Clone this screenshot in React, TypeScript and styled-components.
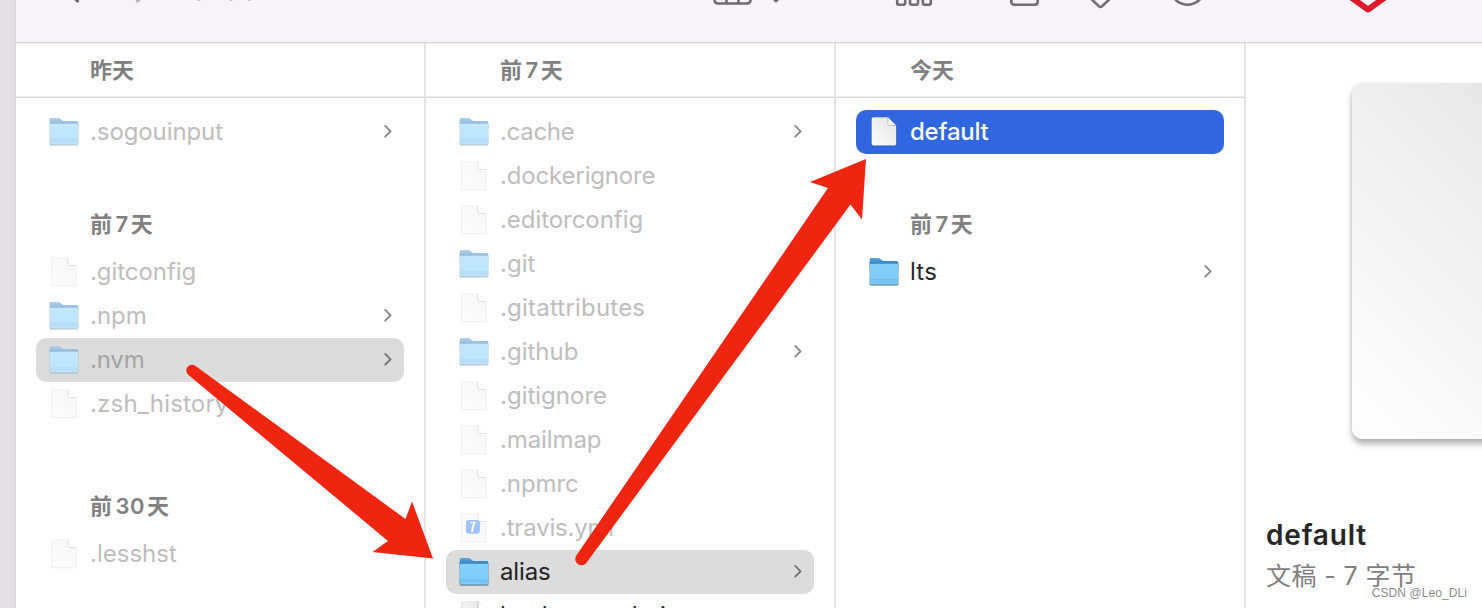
import React from 'react';
import styled, { createGlobalStyle, css } from 'styled-components';

const Global = createGlobalStyle`
  * { box-sizing: border-box; }
  body { margin: 0; overflow: hidden; background: #fff; }
`;

const sans = `Inter, "Noto Sans CJK SC", sans-serif`;

const Desktop = styled.div`
  position: relative;
  display: flex;
  width: 1482px;
  height: 608px;
  overflow: hidden;
  background: #e5e0e6;
  font-family: ${sans};
`;
const Backdrop = styled.div`
  flex: 0 0 16px;
  background: #e5e0e6;
  border-right: 1px solid #dad5db;
`;
const Finder = styled.main`
  flex: 1;
  min-width: 0;
  display: flex;
  flex-direction: column;
  background: #fff;
`;
const Toolbar = styled.header`
  flex: 0 0 43px;
  height: 43px;
  background: #f8f3fa;
  border-bottom: 1px solid #d6d2d8;
  svg { display: block; }
`;
const Browser = styled.div`
  flex: 1;
  min-height: 0;
  display: flex;
`;
const Column = styled.section`
  flex: 0 0 410px;
  border-right: 2px solid #e4e4e4;
  overflow: hidden;
`;
const ColumnHead = styled.div`
  height: 55px;
  padding: 0 0 1px 74px;
  display: flex;
  align-items: center;
  border-top: 1px solid #f0f0f0;
  border-bottom: 1px solid #dadada;
  box-shadow: inset 0 -1px 0 #efefef;
`;
const HeadText = styled.span`
  font-size: 22px;
  line-height: 26px;
  font-weight: 600;
  color: #808080;
  white-space: pre;
`;
const Digits = styled.span`
  margin: 0 2px 0 3.5px;
  letter-spacing: 0.5px;
`;
const Items = styled.div`
  padding: 12px 20px 0;
`;
const GroupHead = styled.div<{ $height: number }>`
  height: ${(p) => p.$height}px;
  padding: 0 0 13px 54px;
  display: flex;
  align-items: flex-end;
`;
type Tone = 'none' | 'gray' | 'blue';
const Row = styled.div<{ $tone: Tone; $dim: boolean }>`
  height: 44px;
  padding: 0 9.5px 0 12px;
  display: flex;
  align-items: center;
  border-radius: 10px;
  font-size: 24px;
  color: ${(p) => (p.$dim ? '#bdbdbd' : '#262626')};
  ${(p) => p.$tone === 'gray' && css`
    background: #dcdcdc;
    color: ${p.$dim ? '#a3a3a3' : '#222'};
  `}
  ${(p) => p.$tone === 'blue' && css`
    background: #3067e0;
    color: #fff;
    font-weight: 500;
  `}
`;
const IconSlot = styled.span`
  flex: 0 0 32px;
  height: 32px;
  margin-right: 10px;
  svg { display: block; overflow: visible; }
`;
const Name = styled.span<{ $tracking: number }>`
  flex: 1;
  line-height: 30px;
  letter-spacing: ${(p) => p.$tracking}px;
  white-space: nowrap;
`;
const Preview = styled.aside`
  flex: 1;
  min-width: 0;
  overflow: hidden;
  border-top: 1px solid #f0f0f0;
`;
const PreviewSheet = styled.div`
  width: 280px;
  height: 356px;
  margin: 39px 0 0 106px;
  border-radius: 11px;
  background: linear-gradient(225deg, #e0e0e0 0%, #eeeeee 45%, #fdfdfd 92%);
  box-shadow: 0 5px 6px rgba(0, 0, 0, 0.3), 0 0 3px rgba(0, 0, 0, 0.08);
`;
const PreviewTitle = styled.div`
  margin: 78px 0 0 20px;
  font-size: 28px;
  line-height: 36px;
  font-weight: 600;
  letter-spacing: 0.8px;
  color: #262626;
`;
const PreviewMeta = styled.div`
  margin: 4px 0 0 20px;
  font-size: 25px;
  line-height: 38px;
  letter-spacing: 0.4px;
  color: #808080;
  white-space: pre;
`;
const Annotations = styled.svg`
  position: absolute;
  left: 0;
  top: 0;
  pointer-events: none;
`;
const Watermark = styled.div`
  position: absolute;
  right: 15px;
  bottom: 7px;
  font: 12px/16px "Liberation Sans", sans-serif;
  letter-spacing: 0.08px;
  color: #8c8c8c;
  text-shadow: 0 0 1px #fff;
`;

const FolderIcon = ({ dim }: { dim: boolean }) => {
  const back = dim ? ['#aad2ed', '#96bde0'] : ['#55a8dc', '#3a85c6'];
  const front = dim ? ['#c3e8fe', '#bbe3fb'] : ['#83d0fc', '#7bcaf8'];
  const id = dim ? 'Dim' : 'Full';
  return (
    <svg width="32" height="32" viewBox="0 0 32 32">
      <defs>
        <linearGradient id={`front${id}`} x1="0" y1="0" x2="0" y2="1">
          <stop offset="0" stopColor={front[0]} />
          <stop offset="1" stopColor={front[1]} />
        </linearGradient>
        <linearGradient id={`back${id}`} x1="0" y1="0" x2="0" y2="1">
          <stop offset="0" stopColor={back[0]} />
          <stop offset="0.5" stopColor={back[1]} />
        </linearGradient>
      </defs>
      <path d="M1.400 6v22q0 1.900 1.700 1.900h25.700q1.900 0 1.900-1.900V8z" fill="#000" opacity={dim ? 0.13 : 0.3} />
      <path d="M1.700 3.400Q1.700 2 3.100 2h7.200q1 0 1.700.6l2 1.700q.8.6 1.800.6h12.900q1.600 0 1.600 1.600V12H1.700z" fill={`url(#back${id})`} />
      <path d="M1.700 9.200q0-1.400 1.400-1.400h25.800q1.400 0 1.400 1.400v17.900q0 1.500-1.500 1.500H3.100q-1.400 0-1.400-1.500z" fill={`url(#front${id})`} />
      <path d="M1.700 23.700H30.300M1.700 25.600H30.300" stroke={dim ? '#b0d8f0' : '#68b6e4'} strokeWidth=".7" />
      <path d="M1.800 27q0 1.500 1.400 1.500h25.500q1.500 0 1.500-1.500" stroke={dim ? '#abd0e8' : '#5ba5d3'} strokeWidth=".9" fill="none" />
    </svg>
  );
};

const FileIcon = ({ dim, badge }: { dim: boolean; badge?: boolean }) => {
  const id = dim ? 'paperDim' : 'paperFull';
  return (
    <svg width="32" height="32" viewBox="0 0 32 32">
      <defs>
        <linearGradient id={id} x1="1" y1="0" x2="0" y2="1">
          <stop offset="0" stopColor={dim ? '#f6f6f6' : '#e4e4e4'} />
          <stop offset="1" stopColor={dim ? '#fdfdfd' : '#fbfbfb'} />
        </linearGradient>
      </defs>
      <path d="M5 1.300h15l8.700 8.700v18.400q0 1.900-1.900 1.900H5q-1.900 0-1.900-1.900V3.200q0-1.900 1.900-1.900z" fill="#000" opacity={dim ? 0.09 : 0.2} />
      <path d="M5.300 1.300h14.300L28.200 9.700v18q0 1.700-1.600 1.700H5.300q-1.700 0-1.700-1.700V2.900q0-1.600 1.700-1.600z" fill={`url(#${id})`} />
      <path d="M19.800 1.300v6.700q0 1.500 1.600 1.500h6.800z" fill="#fff" />
      <path d="M19.900 1.500v6.600q0 1.400 1.500 1.400H28" stroke={dim ? '#dadada' : '#b4b4b4'} strokeWidth=".9" fill="none" />
      {badge && (
        <>
          <rect x="7.900" y="8" width="14" height="13.800" rx="3.200" fill="#9fc3ff" />
          <path d="M15.900 11.200L14 19.300" stroke="#fff" strokeWidth="2" strokeLinecap="round" />
          <path d="M12.800 10.800q2.200-1.300 5.200-.2" stroke="#fff" strokeWidth="1.200" strokeLinecap="round" fill="none" />
        </>
      )}
    </svg>
  );
};

const Chevron = ({ dark }: { dark?: boolean }) => (
  <svg width="14" height="16" viewBox="0 0 14 16" fill="none">
    <path d="M4.200 1.900l5.400 5.400-5.400 5.400" stroke={dark ? '#707070' : '#858585'} strokeWidth="1.800" strokeLinecap="round" strokeLinejoin="round" />
  </svg>
);

interface Entry {
  name: string;
  kind?: 'folder' | 'yaml';
  dim?: boolean;
  tone?: Tone;
  tracking?: number;
}

const FileRow = ({ name, kind, dim = false, tone = 'none', tracking = 0 }: Entry) => (
  <Row $tone={tone} $dim={dim}>
    <IconSlot>
      {kind === 'folder' ? <FolderIcon dim={dim} /> : <FileIcon dim={dim} badge={kind === 'yaml'} />}
    </IconSlot>
    <Name $tracking={tracking}>{name}</Name>
    {kind === 'folder' && <Chevron dark={tone === 'gray'} />}
  </Row>
);

const DaysAgo = ({ days }: { days: number }) => (
  <HeadText>前<Digits>{days}</Digits>天</HeadText>
);

const repoFiles: Entry[] = [
  { name: '.cache', kind: 'folder', dim: true, tracking: -0.3 },
  { name: '.dockerignore', dim: true, tracking: -0.16 },
  { name: '.editorconfig', dim: true, tracking: -0.05 },
  { name: '.git', kind: 'folder', dim: true },
  { name: '.gitattributes', dim: true, tracking: 0.2 },
  { name: '.github', kind: 'folder', dim: true },
  { name: '.gitignore', dim: true },
  { name: '.mailmap', dim: true, tracking: -0.1 },
  { name: '.npmrc', dim: true, tracking: -0.1 },
  { name: '.travis.yml', kind: 'yaml', dim: true, tracking: -0.2 },
  { name: 'alias', kind: 'folder', tone: 'gray', tracking: -0.15 },
  { name: 'bash_completion', tracking: 0.2 },
];

export default function App() {
  return (
    <>
      <Global />
      <Desktop>
        <Backdrop />
        <Finder>
          <Toolbar>
            <svg width="1466" height="42" viewBox="16 0 1466 42" fill="none" stroke="#706b72" strokeWidth="2.6">
              <path d="M68-9l9.500 10" strokeWidth="3.200" strokeLinecap="round" />
              <path d="M146-8l-8.500 9" stroke="#bbb6bd" strokeWidth="3.200" strokeLinecap="round" />
              <path d="M197 0h3.500M229.500 0h3M248 0h3" stroke="#cbc6cd" strokeWidth="2" />
              <path d="M714.500-8V0q0 3.500 3.500 3.500h29q3.500 0 3.500-3.500V-8M726.500-8V3.500M738.500-8V3.500" />
              <path d="M770-5.500l6 6 6-6" strokeWidth="3.600" strokeLinecap="round" strokeLinejoin="round" />
              <rect x="897.200" y="-4" width="8" height="8.800" rx="2" />
              <rect x="910" y="-4" width="8" height="8.800" rx="2" />
              <rect x="922.800" y="-4" width="8" height="8.800" rx="2" />
              <path d="M1011.300-8V1.500q0 3.200 3.200 3.200h20q3.200 0 3.200-3.200V-8" />
              <path d="M1088-4l11 10.300q1.500 1.200 3 0L1113-4" />
              <circle cx="1187.500" cy="-12.500" r="17.200" />
              <path d="M1340-11l28 19 28-19V-20H1340z" fill="#fff" stroke="none" />
              <path d="M1340-10.500l28 20 28-20" stroke="#df1b2b" strokeWidth="6" strokeLinejoin="round" />
            </svg>
          </Toolbar>
          <Browser>
            <Column>
              <ColumnHead><HeadText>昨天</HeadText></ColumnHead>
              <Items>
                <FileRow name=".sogouinput" kind="folder" dim tracking={-0.1} />
                <GroupHead $height={96}><DaysAgo days={7} /></GroupHead>
                <FileRow name=".gitconfig" dim tracking={-0.05} />
                <FileRow name=".npm" kind="folder" dim />
                <FileRow name=".nvm" kind="folder" dim tone="gray" tracking={-0.2} />
                <FileRow name=".zsh_history" dim tracking={0.2} />
                <GroupHead $height={106}><DaysAgo days={30} /></GroupHead>
                <FileRow name=".lesshst" dim />
              </Items>
            </Column>
            <Column>
              <ColumnHead><DaysAgo days={7} /></ColumnHead>
              <Items>
                {repoFiles.map((f) => <FileRow key={f.name} {...f} />)}
              </Items>
            </Column>
            <Column>
              <ColumnHead><HeadText>今天</HeadText></ColumnHead>
              <Items>
                <FileRow name="default" tone="blue" tracking={-0.25} />
                <GroupHead $height={96}><DaysAgo days={7} /></GroupHead>
                <FileRow name="lts" kind="folder" tracking={0.2} />
              </Items>
            </Column>
            <Preview>
              <PreviewSheet />
              <PreviewTitle>default</PreviewTitle>
              <PreviewMeta>文稿 - 7 字节</PreviewMeta>
            </Preview>
          </Browser>
        </Finder>
        <Annotations width="1482" height="608" viewBox="0 0 1482 608" fill="#ef2411">
          <path d="M195.500 366L405.500 519L412 501.500L433 558.500L372.500 552L388 541L188.500 375A5.600 5.600 0 0 1 195.500 366z" />
          <path d="M576 556L828 188L810 182L866 159L862 219.500L850.500 204.500L587 562A6 6 0 0 1 576 556z" />
        </Annotations>
        <Watermark>CSDN @Leo_DLi</Watermark>
      </Desktop>
    </>
  );
}
